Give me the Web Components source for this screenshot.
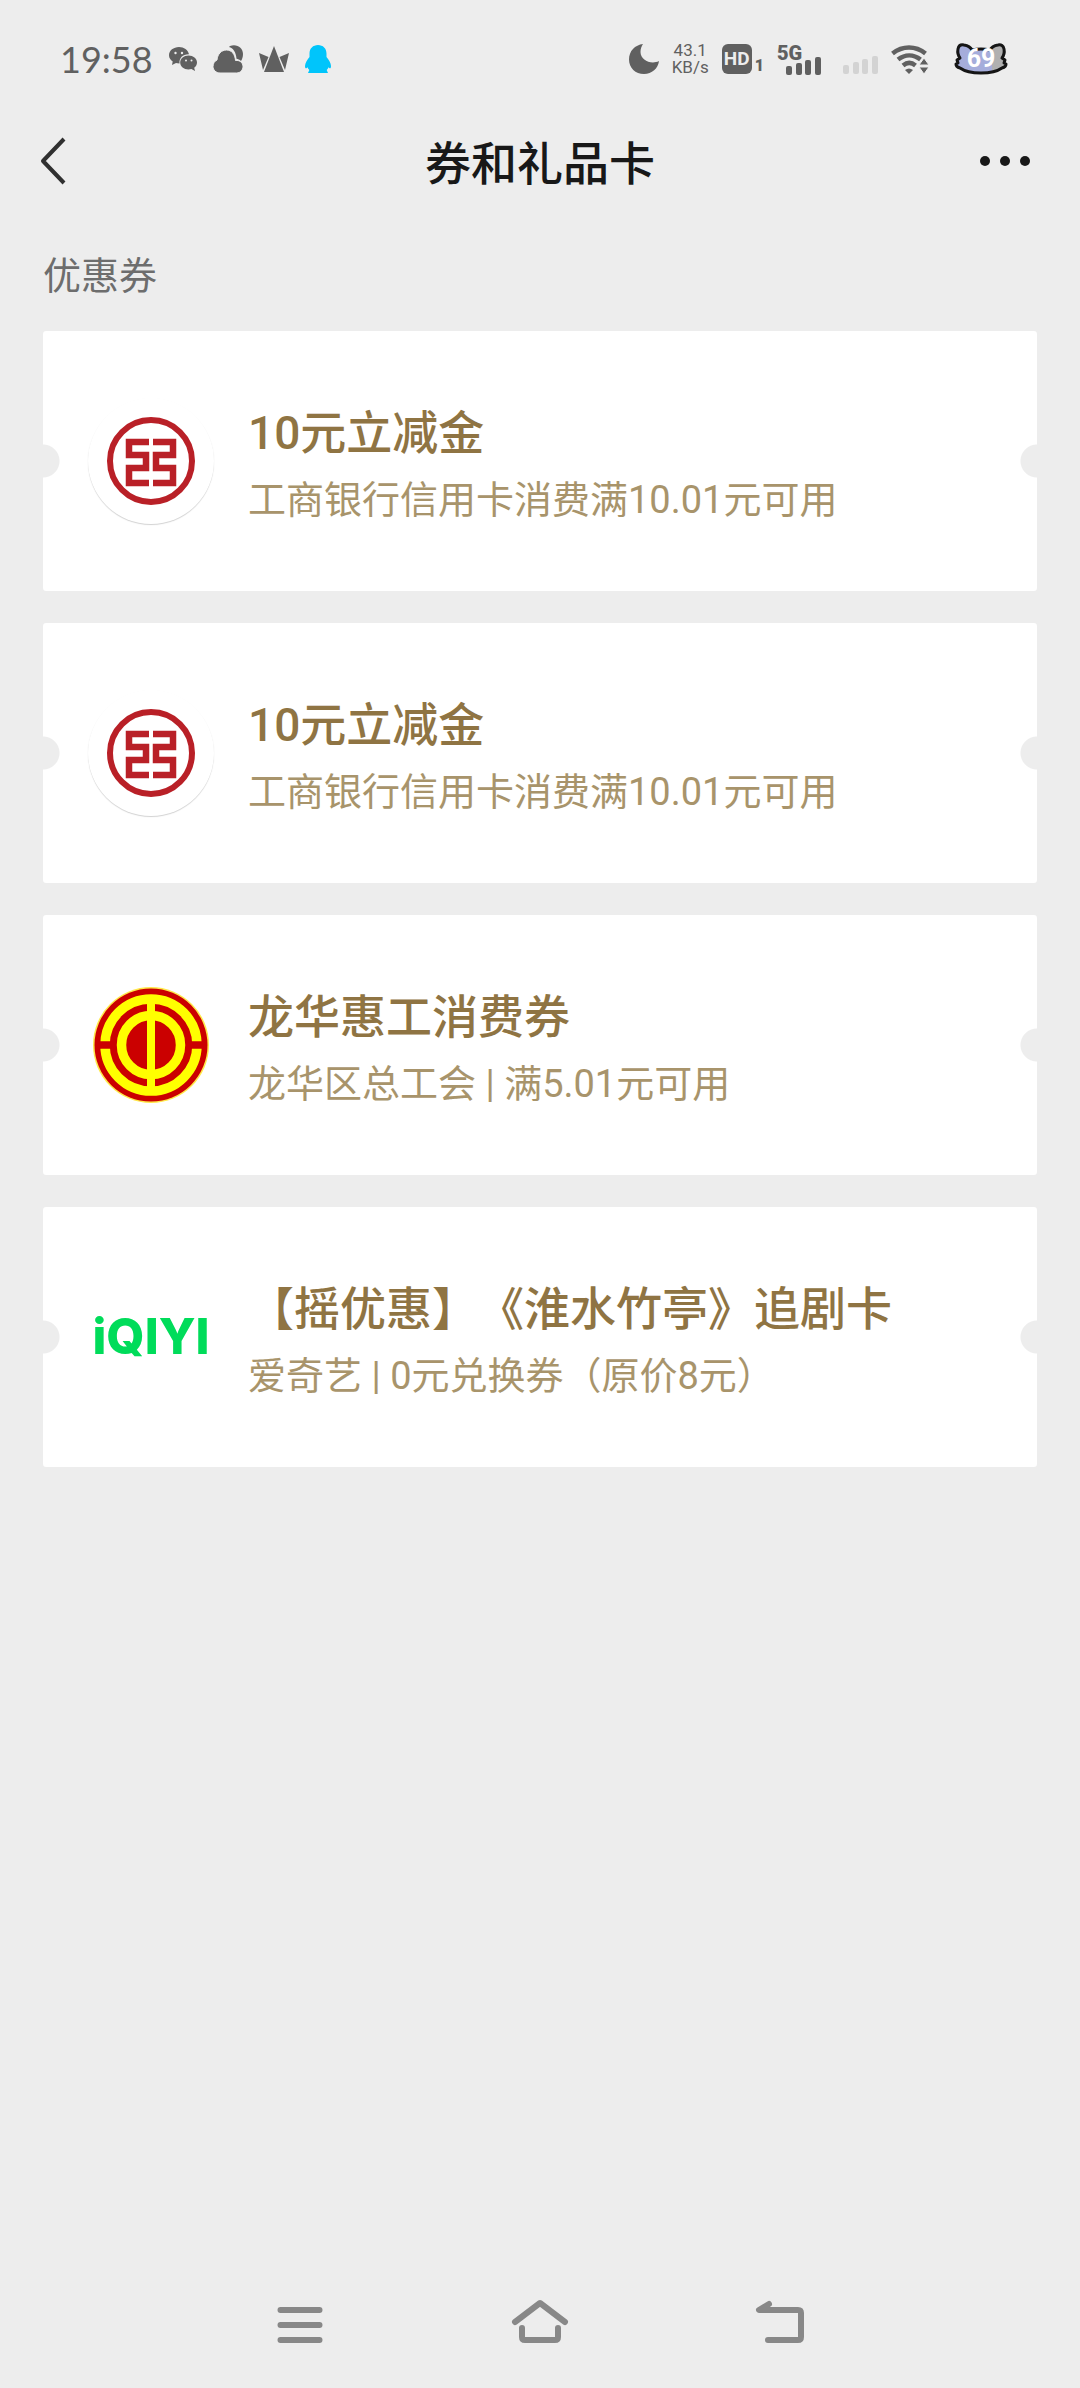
<!DOCTYPE html>
<html lang="zh-CN">
<head>
<meta charset="utf-8">
<meta name="viewport" content="width=device-width, initial-scale=1">
<title>券和礼品卡</title>
<style>
  body {
    margin: 0;
    background: #ededed;
    font-family: Roboto, "Noto Sans CJK SC", sans-serif;
    text-spacing-trim: space-all;
  }
</style>
</head>
<body>
<coupon-page>
  <status-bar slot="status" time="19:58" speed="43.1" battery="69"></status-bar>
  <title-bar slot="header">券和礼品卡</title-bar>
  <coupon-section>
    <span slot="label">优惠券</span>
    <coupon-card>
      <icbc-logo slot="logo"></icbc-logo>
      10元立减金
      <span slot="desc">工商银行信用卡消费满10.01元可用</span>
    </coupon-card>
    <coupon-card>
      <icbc-logo slot="logo"></icbc-logo>
      10元立减金
      <span slot="desc">工商银行信用卡消费满10.01元可用</span>
    </coupon-card>
    <coupon-card>
      <union-logo slot="logo"></union-logo>
      龙华惠工消费券
      <span slot="desc">龙华区总工会 | 满5.01元可用</span>
    </coupon-card>
    <coupon-card>
      <iqiyi-logo slot="logo"></iqiyi-logo>
      【摇优惠】《淮水竹亭》追剧卡
      <span slot="desc">爱奇艺 | 0元兑换券（原价8元）</span>
    </coupon-card>
  </coupon-section>
  <nav-bar slot="nav"></nav-bar>
</coupon-page>

<script>
class CouponPage extends HTMLElement {
  constructor() {
    super();
    this.attachShadow({ mode: 'open' }).innerHTML = `
      <style>
        :host { display: flex; flex-direction: column; min-height: 100vh; }
        main { flex: 1; }
      </style>
      <slot name="status"></slot>
      <slot name="header"></slot>
      <main><slot></slot></main>
      <slot name="nav"></slot>
    `;
  }
}

class StatusBar extends HTMLElement {
  connectedCallback() {
    if (this.shadowRoot) return;
    const bars = `
      <rect x="0" y="9" width="6" height="9" rx="2"/>
      <rect x="10" y="6" width="6" height="12" rx="2"/>
      <rect x="19" y="3" width="6" height="15" rx="2"/>
      <rect x="29" y="0" width="6" height="18" rx="2"/>`;
    const cat = 'M10 3q-5-1-6 4-1 5 2 9l-3 2 1 3-2 1q0 3 4 4 7 5 21 5t21-5q4-1 4-4l-2-1 1-3-3-2q3-4 2-9-1-5-6-4-6 1-8 5-9-2-18 0-2-4-8-5z';
    this.attachShadow({ mode: 'open' }).innerHTML = `
      <style>
        :host {
          display: flex;
          justify-content: space-between;
          align-items: center;
          height: 118px;
          padding: 0 72px 0 60px;
          color: #606060;
        }
        .group { display: flex; align-items: center; }
        .left { gap: 16px; }
        .right { gap: 13px; }
        svg { display: block; fill: currentColor; overflow: visible; }
        time { font: 36px/40px Lato, sans-serif; }
        .speed { font-size: 17px; line-height: 17px; text-align: center; }
        .speed div { white-space: nowrap; }
        .hd { display: flex; align-items: flex-end; gap: 3px; }
        .hd b {
          width: 30px;
          border-radius: 6px;
          background: currentColor;
          font-size: 19px;
          line-height: 30px;
          text-align: center;
        }
        .hd b span { color: #ededed; }
        .hd small { font-size: 16px; line-height: 16px; font-weight: 900; }
        .sim1 { display: grid; width: 44px; }
        .sim1 b { font-size: 20px; line-height: 18px; font-weight: 900; }
        .sim1 svg { justify-self: end; margin-top: -5px; }
        .sim2 { color: #d3d3d3; margin: 12px 0 0 9px; }
        .battery { margin-left: 13px; }
        text { font-family: Roboto, sans-serif; font-weight: 700; }
      </style>
      <div class="group left">
        <time>${this.getAttribute('time')}</time>
        <svg width="28" height="26" viewBox="0 0 28 26">
          <path d="M10 1C4.500 1 0 4.600 0 9.200c0 2.700 1.500 4.800 3.700 6.300L3 19l4-2c1 .3 2 .4 3.500.4C10 12 14 8 20 8.300 19 4 15 1 10 1z"/>
          <path d="M19.500 9.500c-4.600 0-8.300 3.100-8.300 7s3.700 7 8.300 7c1 0 2-.1 2.900-.4L26 25l-.8-3.300c1.700-1.300 2.800-3.100 2.800-5.200 0-3.900-3.800-7-8.500-7z"/>
          <g fill="#ededed"><circle cx="6.500" cy="7" r="1.200"/><circle cx="13" cy="7" r="1.200"/><circle cx="17" cy="14.500" r="1"/><circle cx="22.500" cy="14.500" r="1"/></g>
        </svg>
        <svg width="30" height="28" viewBox="0 0 30 28">
          <path d="M17 1c7-2.500 13 2 13 8 0 3-1 5.500-2 7-1.500-1.500-3-2-4.500-2.300C23 7 20 3 16 2z"/>
          <path d="M7 28c-4 0-7-3-7-6.500 0-3.300 2-5.700 4-6.500C4.500 9 8.500 5 13.500 5c5 0 8.500 4 9 10.500 4-.5 7.500 2 7.500 6 0 3.500-2.500 6.500-6.500 6.500z" stroke="#ededed" stroke-width="1"/>
        </svg>
        <svg width="30" height="26" viewBox="0 0 30 26">
          <path d="M15 0l10 26H5z"/>
          <path d="M0 7l9.500 4-5.500 13zM30 7l-9.500 4 5.500 13z"/>
        </svg>
        <svg width="26" height="28" viewBox="0 0 26 28" color="#00c5fb">
          <path d="M13 0c-5 0-8.500 3.500-8.500 8.500v3.500C2.500 14.500 0 18 0 21c0 2 .5 2.500 1.500 2.200l1-1c.3 1 1 2 1.800 2.800L3 28h20l-1.300-3c.8-.8 1.500-1.800 1.800-2.800l1 1c1 .3 1.500-.2 1.500-2.200 0-3-2.500-6.500-4.500-9V8.500C21.500 3.500 18 0 13 0z"/>
        </svg>
      </div>
      <div class="group right">
        <svg width="30" height="30" viewBox="0 0 30 30">
          <path d="M14 0C6 1 0 7 0 15.500 0 24 6.500 30 15 30c8 0 14-5.500 15-13-8 4-18.500-1-18.500-9C11.500 5 12.500 2 14 0z"/>
        </svg>
        <div class="speed"><div>${this.getAttribute('speed')}</div><div>KB/s</div></div>
        <div class="hd"><b><span>HD</span></b><small>1</small></div>
        <div class="sim1">
          <b>5G</b>
          <svg width="35" height="18" viewBox="0 0 35 18">${bars}</svg>
        </div>
        <svg class="sim2" width="35" height="18" viewBox="0 0 35 18">${bars}</svg>
        <svg width="37" height="30" viewBox="0 0 37 30">
          <g fill="none" stroke="currentColor" stroke-width="4.500">
            <path d="M1.500 9.500c10-8 23-8 33 0"/>
            <path d="M7 15.500c7-5.500 15.500-5.500 22.500 0"/>
            <path d="M12 21.500c4-3.300 8.500-3.300 12.500 0"/>
          </g>
          <path d="M14 26q4-3 8 0l-4 4z"/>
          <path d="M33 14l5 7h-10z M28 23h10l-5 7z" stroke="#ededed"/>
        </svg>
        <svg class="battery" width="54" height="34" viewBox="0 0 54 34">
          <clipPath id="charge"><rect width="38" height="34"/></clipPath>
          <path d="${cat}" fill="#b0b0b0"/>
          <path d="${cat}" fill="#a5addb" clip-path="url(#charge)"/>
          <path d="${cat}" fill="none" stroke="#151515" stroke-width="3" stroke-linejoin="round"/>
          <text x="27" y="25" font-size="25" text-anchor="middle" fill="#fff">${this.getAttribute('battery')}</text>
        </svg>
      </div>
    `;
  }
}

class TitleBar extends HTMLElement {
  constructor() {
    super();
    this.attachShadow({ mode: 'open' }).innerHTML = `
      <style>
        :host {
          display: flex;
          justify-content: space-between;
          align-items: center;
          height: 86px;
          padding: 0 28px;
          color: #181818;
        }
        h1 { margin: 0; padding-top: 6px; font-size: 46px; line-height: 68px; font-weight: 500; }
        button {
          display: flex;
          align-items: center;
          width: 72px;
          height: 72px;
          padding: 0 12px;
          border: 0;
          background: none;
          color: inherit;
        }
        .more { justify-content: flex-end; padding: 0 22px 0 0; }
      </style>
      <button class="back" aria-label="返回">
        <svg width="26" height="48" viewBox="0 0 26 48" fill="none" stroke="#303030" stroke-width="4" stroke-linejoin="round">
          <path d="M24 2L3 24l21 22"/>
        </svg>
      </button>
      <h1><slot></slot></h1>
      <button class="more" aria-label="更多">
        <svg width="50" height="10" viewBox="0 0 50 10" fill="currentColor">
          <circle cx="5" cy="5" r="5"/><circle cx="25" cy="5" r="5"/><circle cx="45" cy="5" r="5"/>
        </svg>
      </button>
    `;
  }
}

class CouponSection extends HTMLElement {
  constructor() {
    super();
    this.attachShadow({ mode: 'open' }).innerHTML = `
      <style>
        :host { display: block; padding: 41px 43px 0; }
        h2 {
          margin: 0 0 24px;
          font-size: 38px;
          line-height: 62px;
          font-weight: 400;
          color: #6d6d6d;
        }
        .list { display: flex; flex-direction: column; gap: 32px; }
      </style>
      <h2><slot name="label"></slot></h2>
      <div class="list"><slot></slot></div>
    `;
  }
}

class CouponCard extends HTMLElement {
  constructor() {
    super();
    this.attachShadow({ mode: 'open' }).innerHTML = `
      <style>
        :host { display: block; }
        /* ticket notches are punched out of the background at both sides */
        a {
          display: flex;
          align-items: center;
          gap: 34px;
          box-sizing: border-box;
          min-height: 260px;
          padding: 56px 45px;
          border-radius: 3px;
          text-decoration: none;
          background:
            radial-gradient(circle at 0 50%, #ededed 16px, transparent 17px),
            radial-gradient(circle at 100% 50%, #ededed 16px, transparent 17px),
            #fff;
        }
        .text { flex: 1; min-width: 0; padding-top: 8px; }
        h3 {
          margin: 0;
          font-size: 46px;
          line-height: 70px;
          font-weight: 500;
          color: #8f7443;
        }
        p { margin: 0; font-size: 38px; line-height: 64px; color: #a8946b; }
      </style>
      <a href="#">
        <slot name="logo"></slot>
        <div class="text">
          <h3><slot></slot></h3>
          <p><slot name="desc"></slot></p>
        </div>
      </a>
    `;
  }
}

class IcbcLogo extends HTMLElement {
  constructor() {
    super();
    this.attachShadow({ mode: 'open' }).innerHTML = `
      <style>
        :host {
          display: block;
          flex: none;
          width: 126px;
          height: 126px;
          border-radius: 50%;
          box-shadow: 0 1px 1px rgba(0, 0, 0, .18);
        }
        svg { display: block; }
      </style>
      <svg width="126" height="126" viewBox="-63 -63 126 126" fill="none" stroke="#b92027">
        <circle r="41" stroke-width="6"/>
        <path d="M-2-19H-22V-6H-5V7H-22V22H-2M2-19H22V-6H5V7H22V22H2" stroke-width="6.500"/>
      </svg>
    `;
  }
}

class UnionLogo extends HTMLElement {
  constructor() {
    super();
    this.attachShadow({ mode: 'open' }).innerHTML = `
      <style>
        :host { display: block; flex: none; width: 126px; height: 126px; }
        svg { display: block; }
      </style>
      <svg width="126" height="126" viewBox="-63 -63 126 126">
        <circle r="58" fill="#ffe94a"/>
        <circle r="56.500" fill="#cb0000"/>
        <circle r="46" fill="none" stroke="#ff0" stroke-width="9.500"/>
        <path d="M-52 0H52" stroke="#cb0000" stroke-width="7.500"/>
        <circle r="29.500" fill="#cb0000" stroke="#ff0" stroke-width="9.500"/>
        <path d="M0-46V46" stroke="#ff0" stroke-width="8"/>
      </svg>
    `;
  }
}

class IqiyiLogo extends HTMLElement {
  constructor() {
    super();
    this.attachShadow({ mode: 'open' }).innerHTML = `
      <style>
        :host {
          display: flex;
          flex: none;
          align-items: center;
          justify-content: center;
          width: 126px;
          height: 126px;
          color: #00dc5a;
          font: 800 49px/60px Inter, sans-serif;
        }
      </style>
      <span>iQIYI</span>
    `;
  }
}

class NavBar extends HTMLElement {
  constructor() {
    super();
    this.attachShadow({ mode: 'open' }).innerHTML = `
      <style>
        :host {
          display: flex;
          justify-content: center;
          align-items: center;
          gap: 120px;
          height: 126px;
        }
        button { width: 120px; height: 90px; padding: 0; border: 0; background: none; }
        svg {
          display: block;
          margin: auto;
          fill: none;
          stroke: #888;
          stroke-width: 6;
          stroke-linecap: round;
          stroke-linejoin: round;
        }
      </style>
      <button aria-label="最近任务">
        <svg width="60" height="60" viewBox="-30 -30 60 60"><path d="M-19.500-15h39M-19.500 0h39M-19.500 15h39"/></svg>
      </button>
      <button aria-label="主屏幕">
        <svg width="60" height="60" viewBox="-30 -30 60 60"><path d="M-25-3L0-22 25-3M-18 3v9q0 3 3 3h30q3 0 3-3V3"/></svg>
      </button>
      <button aria-label="返回">
        <svg width="60" height="60" viewBox="-30 -30 60 60"><path d="M-11-21l-10 6h39q3 0 3 3v24q0 3-3 3h-30"/></svg>
      </button>
    `;
  }
}

customElements.define('coupon-page', CouponPage);
customElements.define('status-bar', StatusBar);
customElements.define('title-bar', TitleBar);
customElements.define('coupon-section', CouponSection);
customElements.define('coupon-card', CouponCard);
customElements.define('icbc-logo', IcbcLogo);
customElements.define('union-logo', UnionLogo);
customElements.define('iqiyi-logo', IqiyiLogo);
customElements.define('nav-bar', NavBar);
</script>
</body>
</html>
